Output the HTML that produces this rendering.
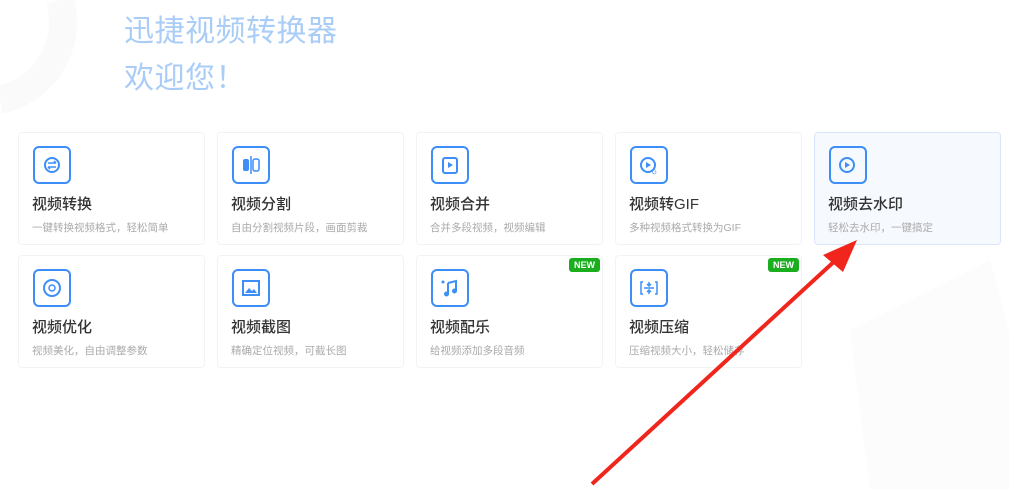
<!DOCTYPE html>
<html><head><meta charset="utf-8"><style>
*{margin:0;padding:0;box-sizing:border-box}
body{width:1009px;height:489px;background:#fff;position:relative;overflow:hidden;font-family:"Liberation Sans","Noto Sans CJK SC",sans-serif}
.h{position:absolute;left:124px;color:#a9cdf7;font-size:30px;letter-spacing:0.5px}
.card{position:absolute;width:187px;height:113px;border:1px solid #f2f3f5;border-radius:4px;background:#fff}
.card.sel{background:#f6f9fe;border-color:#d8e6fb}
.ic{position:absolute;left:14px;top:13px;width:38px;height:38px;border:2px solid #3d8ef7;border-radius:6px}
.ic svg{position:absolute;left:0;top:0}
.t{position:absolute;left:13px;top:60px;font-size:15px;color:#333;font-weight:500}
.s{position:absolute;left:13px;top:87px;font-size:10.5px;color:#aaa;white-space:nowrap}
.new{position:absolute;right:2px;top:2px;background:#1aae1f;color:#fff;font-size:9px;font-weight:bold;padding:2px 5px;border-radius:3px}
</style></head><body>
<svg style="position:absolute;left:0;top:0" width="1009" height="489">
<path d="M60 0 A80 80 0 0 1 0 100" stroke="#fafafa" stroke-width="28" fill="none"/>
<path d="M850 330 L990 260 L1009 330 L1009 489 L870 489 Z" fill="#fcfcfd"/>
</svg>
<div class="h" style="top:6px">迅捷视频转换器</div>
<div class="h" style="top:53px">欢迎您！</div>

<div class="card" style="left:18px;top:132px"><div class="ic"><svg width="34" height="34"><circle cx="17" cy="17" r="7" stroke="#3d8ef7" stroke-width="2" fill="none"/><path d="M13 15h8M19 13l2 2M21 19h-8M15 21l-2-2" stroke="#3d8ef7" stroke-width="1.5" fill="none"/></svg></div><div class="t">视频转换</div><div class="s">一键转换视频格式，轻松简单</div></div>
<div class="card" style="left:217px;top:132px"><div class="ic"><svg width="34" height="34"><rect x="9" y="11" width="6" height="12" rx="2" fill="#3d8ef7"/><line x1="17" y1="8" x2="17" y2="26" stroke="#3d8ef7" stroke-width="1.5"/><rect x="19" y="11" width="6" height="12" rx="2" stroke="#3d8ef7" stroke-width="1.5" fill="none"/></svg></div><div class="t">视频分割</div><div class="s">自由分割视频片段，画面剪裁</div></div>
<div class="card" style="left:416px;top:132px"><div class="ic"><svg width="34" height="34"><rect x="10" y="10" width="14" height="15" rx="2" stroke="#3d8ef7" stroke-width="2" fill="none"/><path d="M15 14l5 3-5 3z" fill="#3d8ef7"/></svg></div><div class="t">视频合并</div><div class="s">合并多段视频，视频编辑</div></div>
<div class="card" style="left:615px;top:132px"><div class="ic"><svg width="34" height="34"><circle cx="16" cy="17" r="7" stroke="#3d8ef7" stroke-width="2" fill="none"/><path d="M14 14l5 3-5 3z" fill="#3d8ef7"/><text x="20" y="26" font-size="6" fill="#3d8ef7">G</text></svg></div><div class="t">视频转GIF</div><div class="s">多种视频格式转换为GIF</div></div>
<div class="card sel" style="left:814px;top:132px"><div class="ic"><svg width="34" height="34"><circle cx="16" cy="17" r="7" stroke="#3d8ef7" stroke-width="2" fill="none"/><path d="M14 14l5 3-5 3z" fill="#3d8ef7"/></svg></div><div class="t">视频去水印</div><div class="s">轻松去水印，一键搞定</div></div>

<div class="card" style="left:18px;top:255px"><div class="ic"><svg width="34" height="34"><circle cx="17" cy="17" r="8" stroke="#3d8ef7" stroke-width="2" fill="none"/><circle cx="17" cy="17" r="3" stroke="#3d8ef7" stroke-width="1.5" fill="none"/></svg></div><div class="t">视频优化</div><div class="s">视频美化，自由调整参数</div></div>
<div class="card" style="left:217px;top:255px"><div class="ic"><svg width="34" height="34"><rect x="9" y="10" width="16" height="14" stroke="#3d8ef7" stroke-width="2" fill="none"/><path d="M11 22l4-5 3 3 2-2 3 4z" fill="#3d8ef7"/></svg></div><div class="t">视频截图</div><div class="s">精确定位视频，可截长图</div></div>
<div class="card" style="left:416px;top:255px"><div class="new">NEW</div><div class="ic"><svg width="34" height="34"><circle cx="10" cy="11" r="1.5" fill="#3d8ef7"/><path d="M15 12l8-2v10M15 12v11" stroke="#3d8ef7" stroke-width="2" fill="none"/><circle cx="13.5" cy="23" r="2.5" fill="#3d8ef7"/><circle cx="21.5" cy="20" r="2.5" fill="#3d8ef7"/></svg></div><div class="t">视频配乐</div><div class="s">给视频添加多段音频</div></div>
<div class="card" style="left:615px;top:255px"><div class="new">NEW</div><div class="ic"><svg width="34" height="34"><path d="M11 11h-2v12h2M23 11h2v12h-2" stroke="#3d8ef7" stroke-width="1.5" fill="none"/><path d="M12 17h10M17 11v4M15 13l2 2 2-2M17 23v-4M15 21l2-2 2 2" stroke="#3d8ef7" stroke-width="1.5" fill="none"/></svg></div><div class="t">视频压缩</div><div class="s">压缩视频大小，轻松储存</div></div>

<svg style="position:absolute;left:0;top:0" width="1009" height="489">
<path d="M592 484 L838 258" stroke="#f0261d" stroke-width="4" fill="none"/>
<path d="M857 240 L823 255 L843 272 Z" fill="#f0261d"/>
</svg>
</body></html>
